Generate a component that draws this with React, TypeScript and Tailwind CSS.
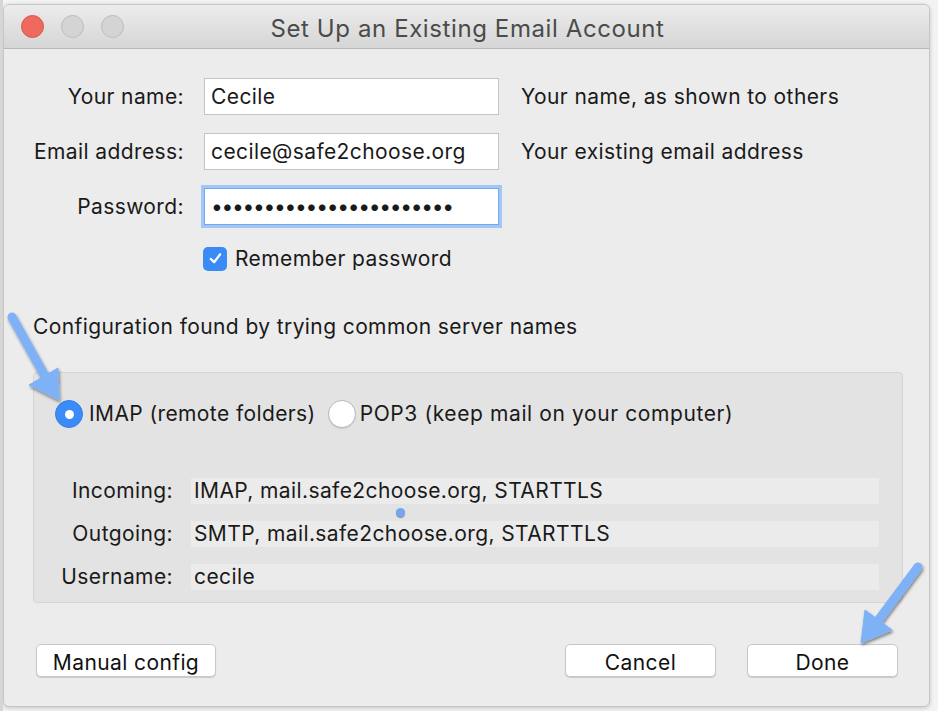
import React from 'react';

function TrafficLights() {
  return (
    <div className="flex items-center gap-[17px] pl-[17px]">
      <span className="w-[23px] h-[23px] rounded-full bg-[#ee6a5f] border border-[#d9564c]" />
      <span className="w-[23px] h-[23px] rounded-full bg-[#d4d4d4] border border-[#bdbdbd]" />
      <span className="w-[23px] h-[23px] rounded-full bg-[#d4d4d4] border border-[#bdbdbd]" />
    </div>
  );
}

function FormRow({ label, value, hint, focused }: { label: string; value: string; hint?: string; focused?: boolean }) {
  return (
    <div className="flex items-center h-[37px]">
      <div className="w-[180px] text-right pt-[1px]">{label}</div>
      <div
        className={
          focused
            ? 'ml-[20px] w-[295px] h-[37px] bg-white border border-[#76a8ef] shadow-[0_0_0_3px_#a3c7f5] flex items-center px-[6px] tracking-[-1.3px]'
            : 'ml-[20px] w-[295px] h-[37px] bg-white border border-[#c4c4c4] flex items-center px-[6px]'
        }
      >
        {value}
      </div>
      {hint && <div className="ml-[22px]">{hint}</div>}
    </div>
  );
}

function ServerRow({ label, value }: { label: string; value: string }) {
  return (
    <div className="flex items-center h-[26px]">
      <div className="w-[139px] text-right">{label}</div>
      <div className="ml-[18px] flex-1 h-[26px] bg-[#ebebeb] flex items-center px-[3px]">{value}</div>
    </div>
  );
}

function Button({ children, className }: { children: React.ReactNode; className: string }) {
  return (
    <button
      className={
        'h-[33px] pt-[2px] bg-white rounded-[5px] border border-[#c8c8c8] shadow-[0_1px_1px_rgba(0,0,0,0.15)] text-[21px] text-[#111] ' +
        className
      }
    >
      {children}
    </button>
  );
}

function Arrows() {
  return (
    <svg className="absolute inset-0 pointer-events-none" width="938" height="711" viewBox="0 0 938 711">
      <defs>
        <filter id="sh" x="-20%" y="-20%" width="140%" height="140%">
          <feDropShadow dx="1" dy="2" stdDeviation="1.5" floodColor="#000" floodOpacity="0.45" />
        </filter>
      </defs>
      <g filter="url(#sh)" fill="#7fb1f6" stroke="#7fb1f6">
        <line x1="12" y1="317" x2="46" y2="378" strokeWidth="9" strokeLinecap="round" />
        <polygon points="59,400 29,385 58,368" strokeWidth="1" strokeLinejoin="round" />
        <line x1="918" y1="567" x2="877" y2="622" strokeWidth="9" strokeLinecap="round" />
        <polygon points="861,643 865,610 892,630" strokeWidth="1" strokeLinejoin="round" />
      </g>
    </svg>
  );
}

export default function App() {
  return (
    <div className="relative w-[938px] h-[711px] bg-[#f3f3f3] overflow-hidden font-['Inter','Noto_Sans',sans-serif] text-[21px] tracking-[0.4px] text-[#1a1a1a]">
      <div className="absolute left-0 top-0 w-[3px] h-full bg-[#d6d6d6]" />
      <div className="ml-[3px] mt-[4px] w-[927px] h-[703px] rounded-[6px] border border-[#c6c6c6] bg-[#ececec] shadow-[0_1px_4px_rgba(0,0,0,0.2)] overflow-hidden flex flex-col">
        <div className="relative h-[44px] shrink-0 bg-gradient-to-b from-[#ececec] to-[#d6d6d6] border-b border-[#b9b9b9] flex items-center">
          <TrafficLights />
          <div className="absolute inset-0 flex items-center justify-center pt-[4px] text-[24px] tracking-[0.6px] text-[#4b4b4b] pl-[2px]">
            Set Up an Existing Email Account
          </div>
        </div>

        <div className="flex flex-col pt-[29px]">
          <div className="flex flex-col gap-[18px]">
            <FormRow label="Your name:" value="Cecile" hint="Your name, as shown to others" />
            <FormRow label="Email address:" value="cecile@safe2choose.org" hint="Your existing email address" />
            <FormRow label="Password:" value="•••••••••••••••••••••••" focused />
          </div>

          <div className="flex items-center mt-[21px] ml-[199px] h-[25px]">
            <span className="w-[24px] h-[24px] rounded-[5px] bg-[#3a8bf5] flex items-center justify-center">
              <svg width="15" height="15" viewBox="0 0 16 16">
                <path d="M3 8.5 L6.5 12 L13 3.5" fill="none" stroke="#fff" strokeWidth="2.4" strokeLinecap="round" strokeLinejoin="round" />
              </svg>
            </span>
            <span className="ml-[8px]">Remember password</span>
          </div>

          <div className="mt-[43px] ml-[29px] h-[26px] flex items-center">Configuration found by trying common server names</div>

          <div className="mt-[32px] ml-[29px] w-[870px] h-[231px] rounded-[4px] bg-[#e3e3e3] border border-[#d5d5d5] flex flex-col">
            <div className="flex items-center mt-[27px] ml-[21px] h-[28px]">
              <span className="w-[28px] h-[28px] rounded-full bg-[#3b8cf6] border border-[#2f7fe8] flex items-center justify-center">
                <span className="w-[9px] h-[9px] rounded-full bg-white" />
              </span>
              <span className="ml-[6px]">IMAP (remote folders)</span>
              <span className="ml-[12px] w-[28px] h-[28px] rounded-full bg-white border border-[#b9b9b9] shadow-[0_1px_1px_rgba(0,0,0,0.1)]" />
              <span className="ml-[4px] tracking-[0.6px]">POP3 (keep mail on your computer)</span>
            </div>

            <div className="relative flex flex-col gap-[17px] mt-[50px] pr-[23px]">
              <ServerRow label="Incoming:" value="IMAP, mail.safe2choose.org, STARTTLS" />
              <ServerRow label="Outgoing:" value="SMTP, mail.safe2choose.org, STARTTLS" />
              <ServerRow label="Username:" value="cecile" />
              <span className="absolute left-[362px] top-[30px] w-[9px] h-[9px] rounded-full bg-[#74a6f2] shadow-[0_1px_1px_rgba(0,0,0,0.4)]" />
            </div>
          </div>

          <div className="flex items-center mt-[41px] ml-[32px] pr-[31px]">
            <Button className="w-[180px]">Manual config</Button>
            <div className="flex-1" />
            <Button className="w-[151px]">Cancel</Button>
            <Button className="w-[151px] ml-[31px]">Done</Button>
          </div>
        </div>
      </div>
      <Arrows />
    </div>
  );
}
